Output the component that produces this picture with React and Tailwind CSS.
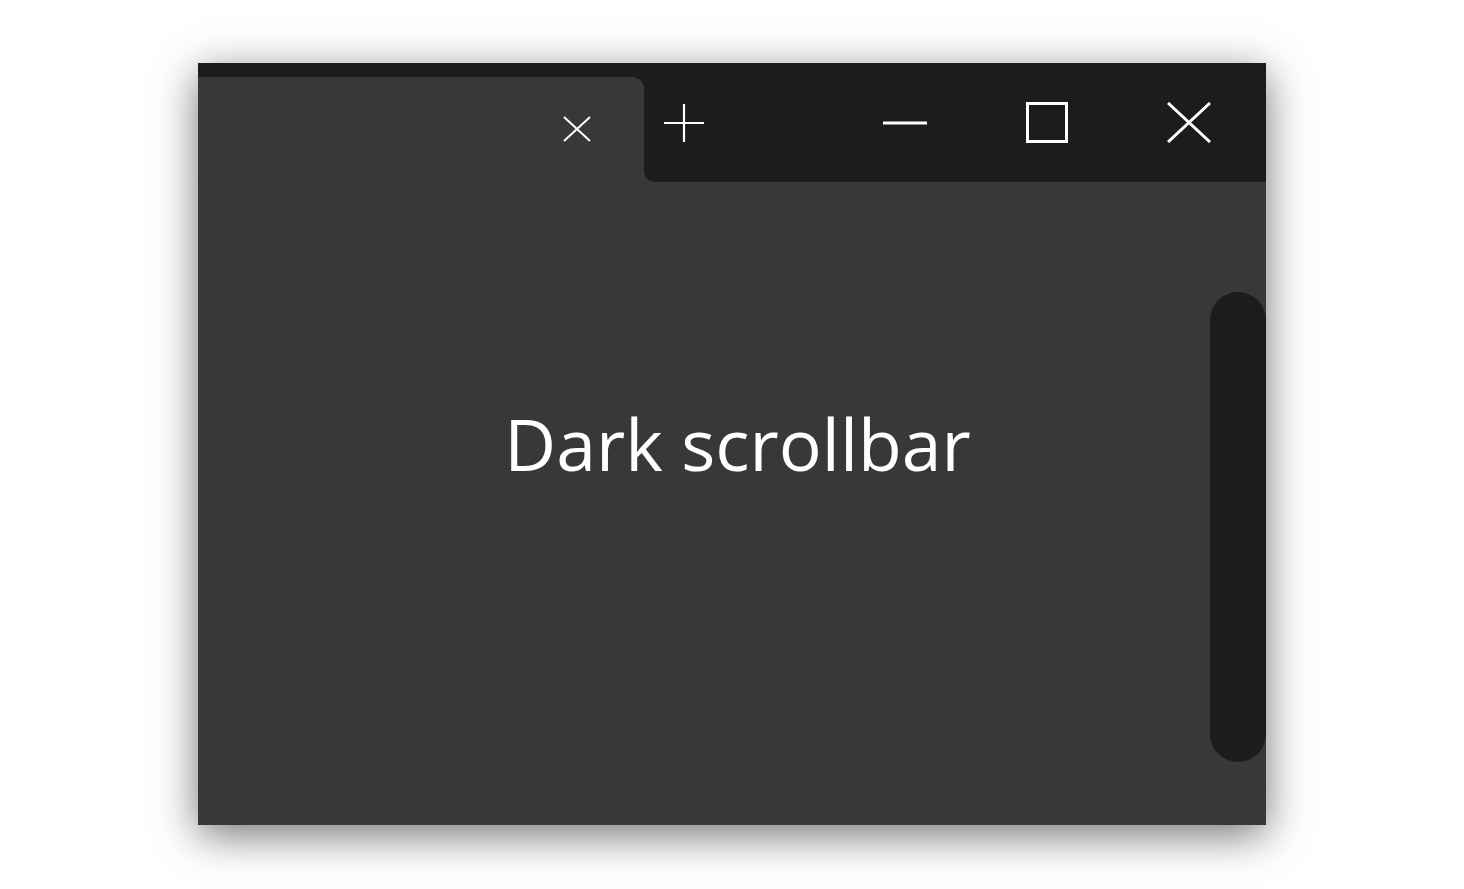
import React from 'react'

const TabClose = () => (
  <svg width="28" height="26" viewBox="0 0 28 26" fill="none" stroke="white" strokeWidth="2">
    <path d="M1 1 L27 25 M27 1 L1 25" />
  </svg>
)

const PlusIcon = () => (
  <svg width="40" height="38" viewBox="0 0 40 38" fill="none" stroke="white" strokeWidth="2.2">
    <path d="M20 0 V38 M0 19 H40" />
  </svg>
)

const MinimizeIcon = () => (
  <svg width="44" height="6" viewBox="0 0 44 6" fill="none" stroke="white" strokeWidth="3">
    <path d="M0 3 H44" />
  </svg>
)

const MaximizeIcon = () => (
  <svg width="42" height="41" viewBox="0 0 42 41" fill="none" stroke="white" strokeWidth="3">
    <rect x="1.5" y="1.5" width="39" height="38" />
  </svg>
)

const CloseIcon = () => (
  <svg width="44" height="41" viewBox="0 0 44 41" fill="none" stroke="white" strokeWidth="3">
    <path d="M1 1 L43 40 M43 1 L1 40" />
  </svg>
)

export default function App() {
  return (
    <div className="h-screen w-full bg-white flex items-start justify-center pt-[63px] font-['Open_Sans',sans-serif]">
      {/* window */}
      <div className="relative w-[1068px] h-[762px] flex flex-col bg-[#383838] shadow-[0_10px_40px_rgba(0,0,0,0.55)]">
        {/* title bar */}
        <div className="h-[119px] flex bg-[#1c1c1c] shrink-0">
          {/* tab column */}
          <div className="w-[446px] flex flex-col pt-[14px]">
            <div className="flex-1 bg-[#383838] rounded-tr-[12px] border-b border-[#333333] flex items-center justify-end pr-[53px]">
              <TabClose />
            </div>
          </div>
          {/* right part */}
          <div className="flex-1 bg-[#383838]">
            <div className="h-full bg-[#1c1c1c] rounded-bl-[11px] flex items-center">
              <button className="w-[80px] h-full flex items-center justify-center">
                <PlusIcon />
              </button>
              <div className="flex-1" />
              <button className="w-[142px] h-full flex items-center justify-center">
                <MinimizeIcon />
              </button>
              <button className="w-[142px] h-full flex items-center justify-center">
                <MaximizeIcon />
              </button>
              <button className="w-[142px] h-full flex items-center justify-center">
                <CloseIcon />
              </button>
              <div className="w-[6px]" />
            </div>
          </div>
        </div>

        {/* content */}
        <div className="flex-1 flex justify-center pt-[226px] pl-[11px]">
          <p className="text-white text-[71.5px] leading-none">Dark scrollbar</p>
        </div>

        {/* scrollbar thumb */}
        <div className="absolute right-0 top-[229px] w-[56px] h-[470px] rounded-full bg-[#1c1c1c]" />
      </div>
    </div>
  )
}
